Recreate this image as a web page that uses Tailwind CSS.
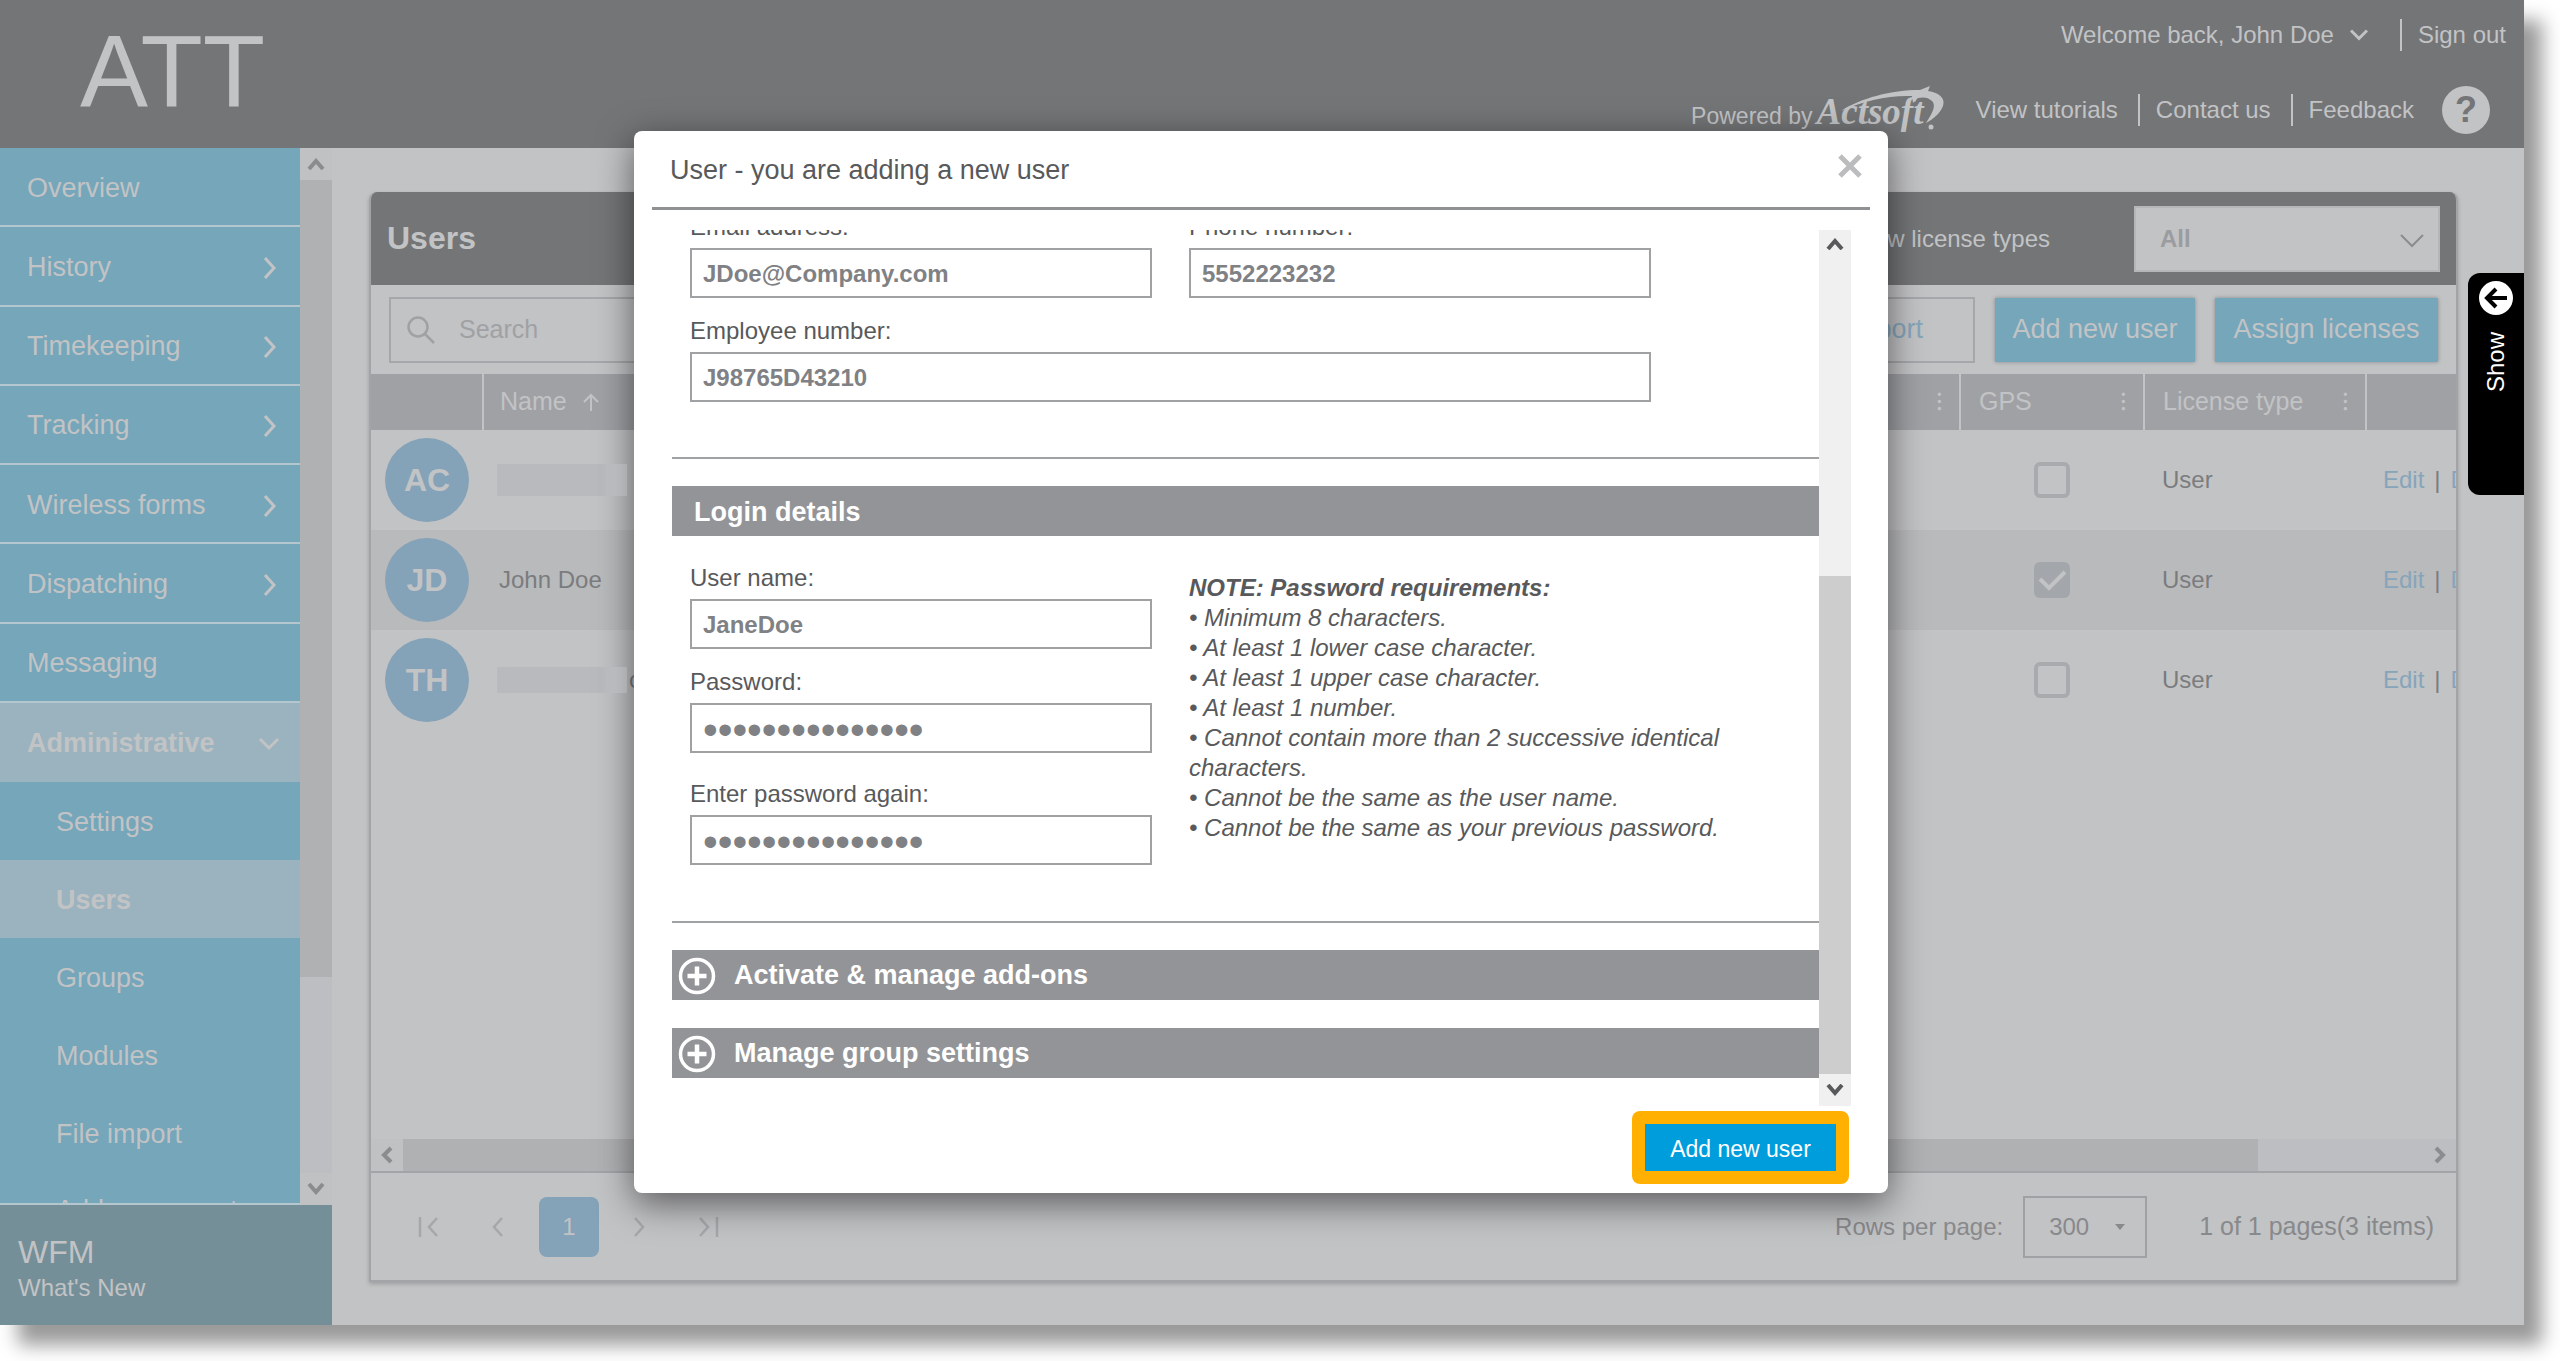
<!DOCTYPE html>
<html lang="en">
<head>
<meta charset="utf-8">
<title>Users</title>
<script src="https://cdn.jsdelivr.net/npm/@tailwindcss/browser@4"></script>
</head>
<body class="flex h-screen flex-col overflow-hidden bg-white pr-9 pb-9 font-['Liberation_Sans',Arial,sans-serif] text-2xl text-[#c2c3c5]">
<div class="relative flex min-h-0 flex-1 flex-col bg-[#c2c3c5] shadow-[18px_20px_18px_rgba(0,0,0,0.4)]">

  <header class="flex h-[148px] shrink-0 justify-between bg-[#747577] pl-20">
    <h1 class="pt-4 text-[102px] leading-[112px]">ATT</h1>
    <div class="flex flex-col items-end pt-5">
      <div class="flex h-[30px] items-center pr-[18px]">
        <button type="button" class="flex items-center gap-4">Welcome back, John Doe
          <svg class="h-3 w-[18px]" viewBox="0 0 18 12" fill="none" stroke="currentColor" stroke-width="3"><path d="M1 1.500 9 9.500l8-8"/></svg>
        </button>
        <a href="#" class="ml-8 border-l-2 border-current pl-4">Sign out</a>
      </div>
      <div class="mt-[34px] flex items-center pr-[34px]">
        <span class="mt-3 text-[23px]">Powered by</span>
        <span class="relative ml-1 w-[128px] pt-1 font-['Liberation_Serif',serif] text-[37px] leading-[48px] font-bold italic">Actsoft
          <svg class="absolute top-0.5 left-0 h-[50px] w-[128px]" viewBox="0 0 128 50" fill="currentColor"><path d="M24 25C44 12 74 4 103 4L113 0l-2 5c18 3 19 13 10 23-4 4-8 7-12 9 5-8 11-17 6-22-4-4-9-4-14-3l-5 5-1-7C72 9 46 15 24 25Z"/><circle cx="114" cy="41" r="2.500"/></svg>
        </span>
        <a href="#" class="ml-[31px]">View tutorials</a>
        <a href="#" class="ml-5 border-l-2 border-current pl-4">Contact us</a>
        <a href="#" class="ml-5 border-l-2 border-current pl-4">Feedback</a>
        <button type="button" aria-label="Help" class="ml-7 flex size-12 items-center justify-center rounded-full bg-current"><span class="text-[36px] font-bold text-[#747577]">?</span></button>
      </div>
    </div>
  </header>

  <div class="flex min-h-0 flex-1">
    <div class="flex w-[332px] shrink-0 flex-col">
      <div class="flex min-h-0 flex-1">
        <nav class="flex w-[300px] flex-col overflow-hidden border-b-2 border-[#b4c6ce] bg-[#76a6ba] text-[27px]">
          <div class="grid h-[634px] shrink-0 grid-rows-8">
            <a href="#" class="flex items-center border-b-2 border-[#b4c6ce] px-[27px] pt-1">Overview</a>
            <a href="#" class="flex items-center justify-between border-b-2 border-[#b4c6ce] pt-1 pr-6 pl-[27px]">History <svg class="h-[22px] w-[13px]" viewBox="0 0 13 22" fill="none" stroke="currentColor" stroke-width="3"><path d="M2 1l9 10-9 10"/></svg></a>
            <a href="#" class="flex items-center justify-between border-b-2 border-[#b4c6ce] pt-1 pr-6 pl-[27px]">Timekeeping <svg class="h-[22px] w-[13px]" viewBox="0 0 13 22" fill="none" stroke="currentColor" stroke-width="3"><path d="M2 1l9 10-9 10"/></svg></a>
            <a href="#" class="flex items-center justify-between border-b-2 border-[#b4c6ce] pt-1 pr-6 pl-[27px]">Tracking <svg class="h-[22px] w-[13px]" viewBox="0 0 13 22" fill="none" stroke="currentColor" stroke-width="3"><path d="M2 1l9 10-9 10"/></svg></a>
            <a href="#" class="flex items-center justify-between border-b-2 border-[#b4c6ce] pt-1 pr-6 pl-[27px]">Wireless forms <svg class="h-[22px] w-[13px]" viewBox="0 0 13 22" fill="none" stroke="currentColor" stroke-width="3"><path d="M2 1l9 10-9 10"/></svg></a>
            <a href="#" class="flex items-center justify-between border-b-2 border-[#b4c6ce] pt-1 pr-6 pl-[27px]">Dispatching <svg class="h-[22px] w-[13px]" viewBox="0 0 13 22" fill="none" stroke="currentColor" stroke-width="3"><path d="M2 1l9 10-9 10"/></svg></a>
            <a href="#" class="flex items-center border-b-2 border-[#b4c6ce] px-[27px] pt-1">Messaging</a>
            <a href="#" class="flex items-center justify-between bg-[#9bb3be] pt-1 pr-5 pl-[27px] font-bold">Administrative <svg class="h-[14px] w-[22px]" viewBox="0 0 22 14" fill="none" stroke="currentColor" stroke-width="3"><path d="M2 2l9 9 9-9"/></svg></a>
          </div>
          <a href="#" class="flex h-[78px] shrink-0 items-center pt-1 pl-14">Settings</a>
          <a href="#" class="flex h-[78px] shrink-0 items-center bg-[#9bb3be] pt-1 pl-14 font-bold">Users</a>
          <a href="#" class="flex h-[78px] shrink-0 items-center pt-1 pl-14">Groups</a>
          <a href="#" class="flex h-[78px] shrink-0 items-center pt-1 pl-14">Modules</a>
          <a href="#" class="flex h-[78px] shrink-0 items-center pt-1 pl-14">File import</a>
          <a href="#" class="flex h-[78px] shrink-0 items-center pl-14">Address export</a>
        </nav>
        <div class="flex w-8 flex-col bg-[#bdbec1] text-[#8b8c8e]">
          <div class="flex h-8 items-center justify-center bg-[#c0c1c3]"><svg class="h-3 w-[18px]" viewBox="0 0 18 12" fill="none" stroke="currentColor" stroke-width="4"><path d="M2 11l7-8 7 8"/></svg></div>
          <div class="h-[797px] bg-[#b0b1b3]"></div>
          <div class="mt-auto flex h-8 items-center justify-center bg-[#c0c1c3]"><svg class="h-3 w-[18px]" viewBox="0 0 18 12" fill="none" stroke="currentColor" stroke-width="4"><path d="M2 1l7 8 7-8"/></svg></div>
        </div>
      </div>
      <div class="flex h-[120px] shrink-0 flex-col justify-center bg-[#758f98] pt-1.5 pl-[18px]">
        <span class="text-[32px] leading-10">WFM</span>
        <a href="#" class="leading-8">What's New</a>
      </div>
    </div>

    <main class="flex min-w-0 flex-1 pt-11 pr-[66px] pb-[43px] pl-[37px]">
      <section class="flex min-w-0 flex-1 flex-col overflow-hidden rounded-t-lg border-2 border-t-0 border-[#a3a4a7] shadow-[0_2px_4px_rgba(0,0,0,0.2)]">
        <div class="flex h-[93px] shrink-0 items-center bg-[#747577] pr-4 pl-4">
          <h2 class="text-[32px] font-bold">Users</h2>
          <label for="lic" class="ml-auto">View license types</label>
          <div class="relative ml-[84px]">
            <select id="lic" class="h-[66px] w-[306px] appearance-none border-2 border-[#b5b6b8] bg-[#c2c3c5] pl-6 font-bold text-[#9b9c9f]"><option>All</option></select>
            <svg class="pointer-events-none absolute top-7 right-4 h-[14px] w-6" viewBox="0 0 24 14" fill="none" stroke="#8b8c8e" stroke-width="2"><path d="M1 1l11 11L23 1"/></svg>
          </div>
        </div>
        <div class="flex h-[89px] shrink-0 items-center gap-5 pr-[18px] pl-[18px] text-[27px]">
          <label class="flex h-[66px] w-[510px] items-center border-2 border-[#a6a7aa] pl-4 text-[#a0a1a4]">
            <svg class="size-7" viewBox="0 0 28 28" fill="none" stroke="currentColor" stroke-width="2.500"><circle cx="11" cy="11" r="9.500"/><path d="M18 18l9 9"/></svg>
            <input type="search" aria-label="Search" placeholder="Search" class="ml-6 w-80 bg-transparent text-[25px] placeholder:text-[#a0a1a4]">
          </label>
          <button type="button" class="ml-auto h-[66px] border-2 border-[#a6a7aa] px-[50px] text-[#86a5ba]">Export</button>
          <button type="button" class="h-16 w-[200px] bg-[#76a6ba] shadow-[0_0_4px_rgba(0,0,0,0.3)]">Add new user</button>
          <button type="button" class="h-16 w-[223px] bg-[#76a6ba] shadow-[0_0_4px_rgba(0,0,0,0.3)]">Assign licenses</button>
        </div>
        <div class="flex-1 overflow-hidden">
          <table class="w-full table-fixed border-collapse text-left">
            <thead class="h-14 bg-[#a0a1a5] text-[25px]">
              <tr>
                <th class="w-[112px] border-r-2 border-[#c2c3c5]"></th>
                <th class="border-r-2 border-[#c2c3c5] px-4 font-normal"><div class="flex items-center gap-4">Name <svg class="h-[18px] w-4" viewBox="0 0 16 18" fill="none" stroke="currentColor" stroke-width="2"><path d="M8 18V2M1 9l7-7 7 7"/></svg><span class="ml-auto">⁝</span></div></th>
                <th class="w-[184px] border-r-2 border-[#c2c3c5] pr-4 pl-[18px] font-normal"><div class="flex justify-between">GPS <span>⁝</span></div></th>
                <th class="w-[222px] border-r-2 border-[#c2c3c5] pr-4 pl-[18px] font-normal"><div class="flex justify-between">License type <span>⁝</span></div></th>
                <th class="w-[90px]"></th>
              </tr>
            </thead>
            <tbody class="text-[#7b7c7e]">
              <tr class="h-[100px]">
                <td class="pl-[14px]"><span class="flex size-[84px] items-center justify-center rounded-full bg-[#84a2b8] text-[32px] font-bold text-[#c2c3c5]">AC</span></td>
                <td class="pl-[14px]"><div class="h-8 w-[130px] bg-linear-to-r from-[#b9babe] from-80% to-[#d6d7d9]"></div></td>
                <td><input type="checkbox" aria-label="GPS" class="mx-auto block size-9 appearance-none rounded-md border-4 border-[#a9aaad]"></td>
                <td class="pl-[18px]">User</td>
                <td class="pl-[17px] whitespace-nowrap"><a href="#" class="text-[#86a5ba]">Edit</a><span class="mx-2.5">|</span><a href="#" class="text-[#86a5ba]">Delete</a></td>
              </tr>
              <tr class="h-[100px] bg-[#b9babc]">
                <td class="pl-[14px]"><span class="flex size-[84px] items-center justify-center rounded-full bg-[#84a2b8] text-[32px] font-bold text-[#c2c3c5]">JD</span></td>
                <td class="pl-4">John Doe</td>
                <td><div class="relative mx-auto size-9"><input type="checkbox" checked aria-label="GPS" class="block size-9 appearance-none rounded-md bg-[#a3a6aa]"><svg class="pointer-events-none absolute inset-0 size-9" viewBox="0 0 36 36" fill="none" stroke="#c2c3c5" stroke-width="4"><path d="M6 17l9 9L31 10"/></svg></div></td>
                <td class="pl-[18px]">User</td>
                <td class="pl-[17px] whitespace-nowrap"><a href="#" class="text-[#86a5ba]">Edit</a><span class="mx-2.5">|</span><a href="#" class="text-[#86a5ba]">Delete</a></td>
              </tr>
              <tr class="h-[100px]">
                <td class="pl-[14px]"><span class="flex size-[84px] items-center justify-center rounded-full bg-[#84a2b8] text-[32px] font-bold text-[#c2c3c5]">TH</span></td>
                <td class="pl-[14px]"><div class="flex items-center"><div class="h-[26px] w-[130px] bg-linear-to-r from-[#b9babe] from-80% to-[#d6d7d9]"></div><span class="ml-0.5">c</span></div></td>
                <td><input type="checkbox" aria-label="GPS" class="mx-auto block size-9 appearance-none rounded-md border-4 border-[#a9aaad]"></td>
                <td class="pl-[18px]">User</td>
                <td class="pl-[17px] whitespace-nowrap"><a href="#" class="text-[#86a5ba]">Edit</a><span class="mx-2.5">|</span><a href="#" class="text-[#86a5ba]">Delete</a></td>
              </tr>
            </tbody>
          </table>
        </div>
        <div class="flex h-[34px] shrink-0 border-b-2 border-[#a3a4a7] bg-[#bdbec1] text-[#8b8c8e]">
          <div class="flex w-8 items-center justify-center bg-[#c0c1c3]"><svg class="h-[18px] w-3" viewBox="0 0 12 18" fill="none" stroke="currentColor" stroke-width="4"><path d="M10 2L3 9l7 7"/></svg></div>
          <div class="mr-[166px] flex-1 bg-[#b0b1b3]"></div>
          <div class="flex w-8 items-center justify-center"><svg class="h-[18px] w-3" viewBox="0 0 12 18" fill="none" stroke="currentColor" stroke-width="4"><path d="M2 2l7 7-7 7"/></svg></div>
        </div>
        <div class="flex h-[107px] shrink-0 items-center pr-[22px] pl-[47px] text-[#88898b]">
          <button type="button" aria-label="First page"><svg class="h-5 w-5" viewBox="0 0 20 20" fill="none" stroke="#a6a7aa" stroke-width="2.500"><path d="M2 0v20M19 1l-8 9 8 9"/></svg></button>
          <button type="button" aria-label="Previous page" class="ml-[54px]"><svg class="h-5 w-3" viewBox="0 0 12 20" fill="none" stroke="#a6a7aa" stroke-width="2.500"><path d="M10 1l-8 9 8 9"/></svg></button>
          <button type="button" class="ml-[35px] size-[60px] rounded-lg bg-[#84a2b8] text-[#c2c3c5]">1</button>
          <button type="button" aria-label="Next page" class="ml-[34px]"><svg class="h-5 w-3" viewBox="0 0 12 20" fill="none" stroke="#a6a7aa" stroke-width="2.500"><path d="M2 1l8 9-8 9"/></svg></button>
          <button type="button" aria-label="Last page" class="ml-[54px]"><svg class="h-5 w-5" viewBox="0 0 20 20" fill="none" stroke="#a6a7aa" stroke-width="2.500"><path d="M18 0v20M1 1l8 9-8 9"/></svg></button>
          <label for="rows" class="ml-auto">Rows per page:</label>
          <div class="relative ml-5">
            <select id="rows" class="h-[62px] w-[124px] appearance-none border-2 border-[#a0a1a4] pl-6"><option>300</option></select>
            <svg class="pointer-events-none absolute top-7 right-[22px] h-[6px] w-[10px]" viewBox="0 0 10 6" fill="currentColor"><path d="M0 0h10L5 6z"/></svg>
          </div>
          <span class="ml-[52px] text-[25px]">1 of 1 pages(3 items)</span>
        </div>
      </section>
    </main>
  </div>

  <button type="button" class="absolute top-[273px] right-0 flex h-[222px] w-14 flex-col items-center rounded-l-xl bg-black pt-2 text-white">
    <svg class="size-[34px]" viewBox="0 0 34 34" fill="none"><circle cx="17" cy="17" r="17" fill="#fff"/><path d="M28 17H9M17 8l-9 9 9 9" stroke="#000" stroke-width="4"/></svg>
    <span class="mt-[17px] rotate-180 [writing-mode:vertical-rl]">Show</span>
  </button>

  <div class="pointer-events-none absolute inset-0 flex items-start justify-center pt-[131px] pr-0.5">
    <div role="dialog" aria-labelledby="dlg" class="w-[1254px] max-w-full rounded-lg bg-white pb-[9px] text-[#58595b] shadow-[0_10px_36px_rgba(0,0,0,0.55)]">
      <div class="mx-[18px] flex h-[79px] items-center justify-between border-b-3 border-[#8f9193] pl-[18px]">
        <h2 id="dlg" class="pt-1 text-[27px]">User - you are adding a new user</h2>
        <button type="button" aria-label="Close" class="-mt-1.5 p-2"><svg class="size-6" viewBox="0 0 24 24" fill="none" stroke="#bbbcbe" stroke-width="5"><path d="M2 2l20 20M22 2L2 22"/></svg></button>
      </div>
      <form class="mt-5">
        <div class="flex overflow-hidden pr-[37px] pl-[38px]">
          <div class="-mt-4 flex-1 pb-7">
            <div class="grid grid-cols-[462px_462px] gap-x-[37px] gap-y-5 pl-[18px]">
              <div><label for="em" class="mb-2 block leading-[26px]">Email address:</label><input id="em" type="email" value="JDoe@Company.com" class="block h-[50px] w-full border-2 border-[#a0a1a3] px-[11px] pt-0.5 font-bold text-[#808184]"></div>
              <div><label for="ph" class="mb-2 block leading-[26px]">Phone number:</label><input id="ph" type="tel" value="5552223232" class="block h-[50px] w-full border-2 border-[#a0a1a3] px-[11px] pt-0.5 font-bold text-[#808184]"></div>
              <div class="col-span-2"><label for="en" class="mb-2 block leading-[26px]">Employee number:</label><input id="en" value="J98765D43210" class="block h-[50px] w-full border-2 border-[#a0a1a3] px-[11px] pt-0.5 font-bold text-[#808184]"></div>
            </div>
            <hr class="mt-[55px] border-t-2 border-[#a0a1a3]">
            <h3 class="mt-[27px] h-[50px] bg-[#939497] pl-[22px] text-[27px] leading-[52px] font-bold text-white">Login details</h3>
            <div class="mt-7 grid grid-cols-[462px_1fr] gap-x-[37px] pl-[18px]">
              <div>
                <label for="un" class="mb-2 block leading-[27px]">User name:</label><input id="un" value="JaneDoe" class="block h-[50px] w-full border-2 border-[#a0a1a3] px-[11px] pt-0.5 font-bold text-[#808184]">
                <label for="pw" class="mt-5 mb-2 block leading-[26px]">Password:</label><input id="pw" type="password" value="abcdefghijklmno" class="block h-[50px] w-full border-2 border-[#a0a1a3] px-[11px] pt-1 text-[42px] text-[#808184]">
                <label for="pa" class="mt-7 mb-2 block leading-[26px]">Enter password again:</label><input id="pa" type="password" value="abcdefghijklmno" class="block h-[50px] w-full border-2 border-[#a0a1a3] px-[11px] pt-1 text-[42px] text-[#808184]">
              </div>
              <div class="pt-[9px] leading-[30px] italic">
                <p class="font-bold">NOTE: Password requirements:</p>
                <p>• Minimum 8 characters.</p>
                <p>• At least 1 lower case character.</p>
                <p>• At least 1 upper case character.</p>
                <p>• At least 1 number.</p>
                <p>• Cannot contain more than 2 successive identical<br>characters.</p>
                <p>• Cannot be the same as the user name.</p>
                <p>• Cannot be the same as your previous password.</p>
              </div>
            </div>
            <hr class="mt-14 border-t-2 border-[#a0a1a3]">
            <button type="button" class="mt-[27px] flex h-[50px] w-full items-center gap-[18px] bg-[#939497] pt-0.5 pl-1.5 text-[27px] font-bold text-white"><svg class="size-[38px]" viewBox="0 0 38 38" fill="none" stroke="currentColor"><circle cx="19" cy="19" r="16.500" stroke-width="3.500"/><path d="M19 9.500v19M9.500 19h19" stroke-width="4.500"/></svg>Activate &amp; manage add-ons</button>
            <button type="button" class="mt-7 flex h-[50px] w-full items-center gap-[18px] bg-[#939497] pt-0.5 pl-1.5 text-[27px] font-bold text-white"><svg class="size-[38px]" viewBox="0 0 38 38" fill="none" stroke="currentColor"><circle cx="19" cy="19" r="16.500" stroke-width="3.500"/><path d="M19 9.500v19M9.500 19h19" stroke-width="4.500"/></svg>Manage group settings</button>
          </div>
          <div class="flex w-8 flex-col justify-between bg-[#f0f0f0] text-[#58595b]">
            <div class="flex h-7 items-center justify-center"><svg class="h-3 w-[18px]" viewBox="0 0 18 12" fill="none" stroke="currentColor" stroke-width="4"><path d="M2 11l7-8 7 8"/></svg></div>
            <div>
              <div class="h-[498px] bg-[#cdcdcd]"></div>
              <div class="flex h-8 items-center justify-center"><svg class="h-3 w-[18px]" viewBox="0 0 18 12" fill="none" stroke="currentColor" stroke-width="4"><path d="M2 1l7 8 7-8"/></svg></div>
            </div>
          </div>
        </div>
        <div class="mt-[5px] flex justify-end pr-[39px]">
          <div class="rounded-lg bg-[#ffb000] p-[13px]"><button type="button" class="block h-[47px] w-[191px] bg-[#009ddc] pt-1 text-[23px] text-white">Add new user</button></div>
        </div>
      </form>
    </div>
  </div>
</div>
</body>
</html>
